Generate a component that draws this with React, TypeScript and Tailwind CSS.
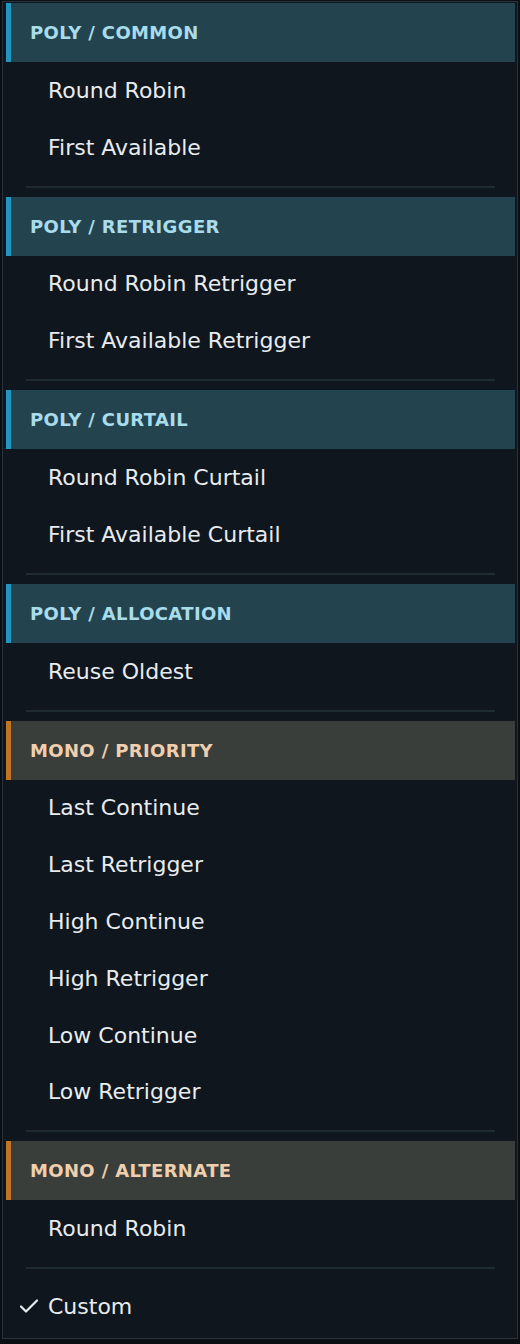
type Group = {
  title: string;
  kind: "poly" | "mono";
  items: string[];
};

const groups: Group[] = [
  { title: "POLY / COMMON", kind: "poly", items: ["Round Robin", "First Available"] },
  { title: "POLY / RETRIGGER", kind: "poly", items: ["Round Robin Retrigger", "First Available Retrigger"] },
  { title: "POLY / CURTAIL", kind: "poly", items: ["Round Robin Curtail", "First Available Curtail"] },
  { title: "POLY / ALLOCATION", kind: "poly", items: ["Reuse Oldest"] },
  {
    title: "MONO / PRIORITY",
    kind: "mono",
    items: ["Last Continue", "Last Retrigger", "High Continue", "High Retrigger", "Low Continue", "Low Retrigger"],
  },
  { title: "MONO / ALTERNATE", kind: "mono", items: ["Round Robin"] },
];

function Header({ title, kind }: { title: string; kind: Group["kind"] }) {
  const poly = kind === "poly";
  return (
    <div
      className={`flex h-[59px] items-center border-l-[5px] pl-[19px] text-[18px] font-bold tracking-[0.02em] ${
        poly ? "border-[#2196c0] bg-[#23434f] text-[#a9dcea]" : "border-[#c27423] bg-[#393e3b] text-[#efcfae]"
      }`}
    >
      {title}
    </div>
  );
}

function Item({ label, checked }: { label: string; checked?: boolean }) {
  return (
    <div className="relative flex h-[56.8px] items-center pl-[42px] text-[22px] text-[#e8ecef]">
      {checked && (
        <svg
          className="absolute left-[13px] top-[20px]"
          width="20"
          height="16"
          viewBox="0 0 20 16"
          fill="none"
          stroke="#e8ecef"
          strokeWidth="2.2"
          strokeLinecap="round"
          strokeLinejoin="round"
        >
          <polyline points="2,8.5 7,13.5 18,2.5" />
        </svg>
      )}
      {label}
    </div>
  );
}

function Separator() {
  return (
    <div className="pt-[10px] pb-[9px] pl-[20px] pr-[20px]">
      <div className="h-[2px] bg-[#1f2b33]" />
    </div>
  );
}

export default function App() {
  return (
    <div className="min-h-[1344px] w-[520px] bg-[#0b0f13] px-[2px] pt-[1px]" style={{ fontFamily: '"DejaVu Sans", sans-serif' }}>
      <div className="h-[1338px] border border-[#27323b] bg-[#0f161d] pt-[1px] pl-[3px] pr-[2px]">
        {groups.map((g) => (
          <div key={g.title}>
            <Header title={g.title} kind={g.kind} />
            {g.items.map((it) => (
              <Item key={it} label={it} />
            ))}
            <Separator />
          </div>
        ))}
        <Item label="Custom" checked />
      </div>
    </div>
  );
}
